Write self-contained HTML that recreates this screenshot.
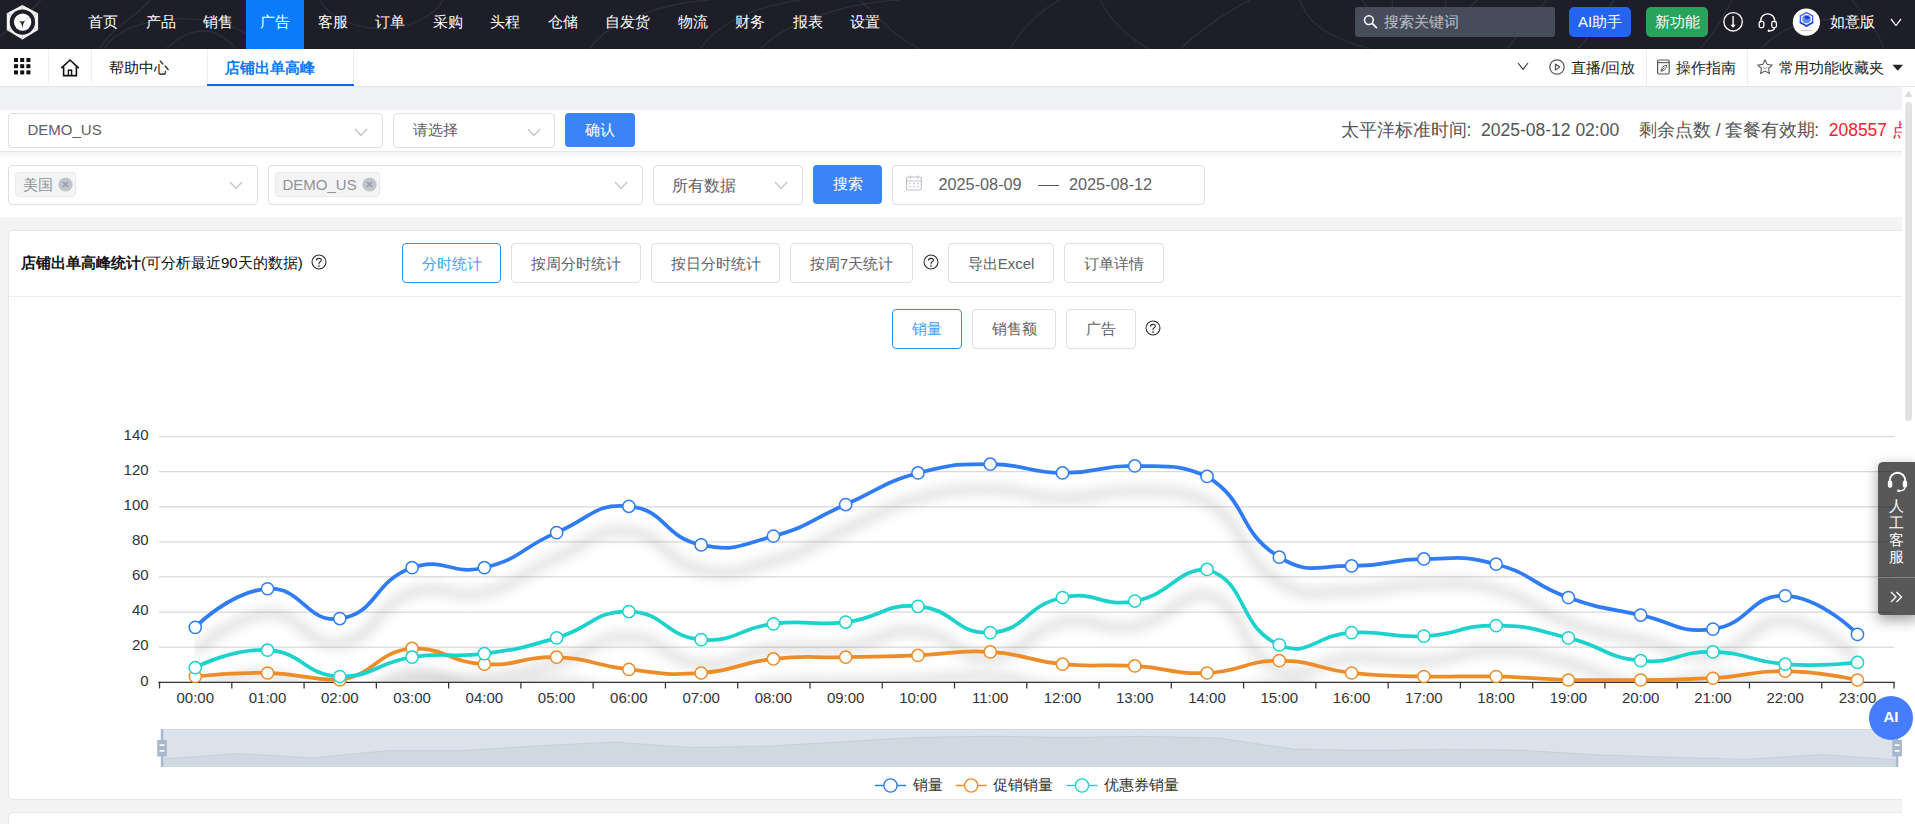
<!DOCTYPE html><html lang="zh"><head><meta charset="utf-8"><title>店铺出单高峰</title><style>
*{box-sizing:border-box;margin:0;padding:0}
html,body{width:1915px;height:824px;overflow:hidden;background:#f4f4f4}
body{font-family:"Liberation Sans",sans-serif;font-size:15px;color:#333;position:relative}
.abs{position:absolute}
.t{position:absolute;white-space:nowrap;line-height:20px;height:20px}
#nav{position:absolute;left:0;top:0;width:1915px;height:49px;background:#1e1e28;overflow:hidden}
#nav .ni{position:absolute;top:0;height:49px;line-height:44px;color:#fff;font-size:15px;font-weight:500;text-align:center;white-space:nowrap}
#tabs{position:absolute;left:0;top:49px;width:1915px;height:38px;background:#fff;border-bottom:1px solid #e6e6e6}
.vsep{position:absolute;top:0;width:1px;height:34px;background:#eee}
#band{position:absolute;left:0;top:87px;width:1902px;height:23px;background:#f0f2f5}
#row1{position:absolute;left:0;top:110px;width:1902px;height:42px;background:#fff;border-bottom:1px solid #e5e6e9}
#row1sh{position:absolute;left:0;top:152px;width:1902px;height:7px;background:linear-gradient(#f2f3f4,#fff)}
#row2{position:absolute;left:0;top:152px;width:1902px;height:65px;background:#fff}
.sel{position:absolute;background:#fff;border:1px solid #dcdfe6;border-radius:4px}
.btn{position:absolute;background:#fff;border:1px solid #dcdfe6;border-radius:4px;color:#606266;font-size:15px;text-align:center;white-space:nowrap;height:40px;line-height:39px;top:243px}
.btn.on{border-color:#3a8ee6;color:#409eff}
.pbtn{position:absolute;background:#3a84f7;border-radius:4px;color:#fff;font-size:15px;text-align:center;white-space:nowrap}
.tag{position:absolute;background:#f4f4f5;border:1px solid #e9e9eb;border-radius:4px;height:25px;top:6px;color:#909399;font-size:15px;line-height:23px;white-space:nowrap}
.card{position:absolute;left:8px;width:1900px;background:#fff;border:1px solid #e4e7ed;border-radius:5px}
#scroll{position:absolute;left:1902px;top:87px;width:13px;height:737px;background:#fff}
text.ax{font-family:"Liberation Sans",sans-serif;font-size:15px;fill:#333}
</style></head><body>
<div id="nav">
<svg class="abs" style="left:0;top:0" width="1915" height="49" viewBox="0 0 1915 49"><g fill="none" stroke="#fff" stroke-opacity="0.07" stroke-width="1.3"><path d="M0 36 C10 30 30 12 41 0"/><path d="M104 49 C120 20 190 8 240 30 C250 36 256 44 258 49"/><path d="M150 0 C140 14 108 30 100 49"/><path d="M166 49 C190 26 215 24 236 49"/><path d="M320 0 C330 22 380 40 420 20 C432 14 440 6 443 0"/><path d="M590 49 C600 30 640 10 690 2 C700 1 706 0 710 0"/><path d="M700 49 C720 20 760 6 800 0"/><path d="M760 49 C800 10 880 0 900 0"/><path d="M860 0 C880 20 900 40 920 49"/><path d="M1010 49 C1020 30 1040 10 1060 0"/><path d="M1100 0 C1110 20 1130 40 1150 49"/><path d="M1300 0 C1310 30 1340 40 1370 49"/><path d="M1180 49 C1200 30 1230 10 1250 0"/><path d="M1507 49 C1520 32 1535 13 1547 0"/><path d="M1578 49 C1590 35 1604 16 1614 0"/><path d="M1700 49 C1712 36 1722 20 1732 0"/><path d="M1392 0 A27 27 0 0 0 1446 0"/><path d="M1362 0 C1380 30 1440 36 1478 0"/><path d="M1852 0 C1870 20 1880 36 1884 49"/><path d="M1760 49 C1790 20 1830 10 1860 30"/></g></svg>
<svg class="abs" style="left:5px;top:3px" width="36" height="39" viewBox="0 0 36 39"><path d="M17.4 2 L33.1 10.2 L33.1 26.9 L17.4 36.6 L1.8 26.9 L1.8 10.2 Z" fill="#f3f3f4"/><path d="M17.4 2 L17.4 7 M33.1 10.2 L28.6 12.7 M33.1 26.9 L28.6 25.4 M17.4 36.6 L17.4 32 M1.8 26.9 L6.2 25.4 M1.8 10.2 L6.2 12.7" stroke="#c4c4c8" stroke-width="0.8"/><circle cx="17.4" cy="19.1" r="12.7" fill="#1e1e28"/><circle cx="17.6" cy="19.1" r="8.7" fill="#fdfdfd"/><path d="M14.4 18.1 L11.8 14.6 M20.3 17.9 L23.2 14.4" stroke="#d5d5d8" stroke-width="1"/><path d="M14.2 18 Q17.4 19 20.2 17.8 Q17.9 19.8 17.5 25.8 Q17 19.8 14.2 18 Z" fill="#1e1e28"/></svg>
<div class="ni" style="left:74.0px;width:58.0px">首页</div>
<div class="ni" style="left:131.5px;width:58.0px">产品</div>
<div class="ni" style="left:189.0px;width:58.0px">销售</div>
<div class="ni" style="left:246.0px;width:58.0px;background:#0a7bfa">广告</div>
<div class="ni" style="left:303.5px;width:58.0px">客服</div>
<div class="ni" style="left:361.0px;width:58.0px">订单</div>
<div class="ni" style="left:418.5px;width:58.0px">采购</div>
<div class="ni" style="left:476.0px;width:58.0px">头程</div>
<div class="ni" style="left:533.5px;width:58.0px">仓储</div>
<div class="ni" style="left:591.0px;width:73.0px">自发货</div>
<div class="ni" style="left:663.5px;width:58.0px">物流</div>
<div class="ni" style="left:721.0px;width:58.0px">财务</div>
<div class="ni" style="left:778.5px;width:58.0px">报表</div>
<div class="ni" style="left:836.0px;width:58.0px">设置</div>
<div class="abs" style="left:1355px;top:7px;width:200px;height:30px;background:#474c5a;border-radius:3px"></div>
<svg class="abs" style="left:1362px;top:13px" width="18" height="18" viewBox="0 0 18 18"><circle cx="6.9" cy="7.1" r="4.4" fill="none" stroke="#fff" stroke-width="1.5"/><path d="M10.2 10.4 L14.4 14.6" stroke="#fff" stroke-width="1.7" stroke-linecap="round"/></svg>
<div class="t" style="left:1384px;top:12px;color:#bdc0c7;font-size:15px">搜索关键词</div>
<div class="pbtn" style="left:1569px;top:7px;width:62px;height:30px;line-height:29px;background:#2464f2;border-radius:5px;font-weight:500">AI助手</div>
<div class="pbtn" style="left:1646px;top:7px;width:62px;height:30px;line-height:29px;background:#27a35b;border-radius:5px;font-weight:500">新功能</div>
<svg class="abs" style="left:1722px;top:11px" width="22" height="22" viewBox="0 0 22 22"><circle cx="11.1" cy="10.8" r="9.2" fill="none" stroke="#fff" stroke-width="1.35"/><path d="M11.1 5 L11.1 14.4" fill="none" stroke="#fff" stroke-width="1.4"/><path d="M8.5 13.8 L13.7 13.8 L11.1 16.8 Z" fill="#fff"/></svg>
<svg class="abs" style="left:1757px;top:11px" width="22" height="22" viewBox="0 0 22 22"><path d="M3.7 11.5 V9.8 A7 7 0 0 1 17.7 9.8 V11.5" fill="none" stroke="#fff" stroke-width="1.35"/><rect x="2.2" y="10.4" width="4.6" height="6.2" rx="1.5" fill="none" stroke="#fff" stroke-width="1.3"/><rect x="14.8" y="10.4" width="4.6" height="6.2" rx="1.5" fill="none" stroke="#fff" stroke-width="1.3"/><path d="M17.6 16.6 C17.4 18.8 15.2 19.7 12.4 19.8" fill="none" stroke="#fff" stroke-width="1.3"/><circle cx="11.8" cy="19.7" r="1.2" fill="#fff"/></svg>
<svg class="abs" style="left:1792px;top:8px" width="29" height="29" viewBox="0 0 29 29"><circle cx="14.4" cy="14.2" r="13.6" fill="#fff"/><path d="M14.5 3.8 L21.3 7.5 L21.3 15 L14.5 18.9 L7.7 15 L7.7 7.5 Z" fill="#3f63e6"/><path d="M14.5 5.3 L20 8.3 L20 14.3 L14.5 17.4 L9 14.3 L9 8.3 Z" fill="#e9f0ff"/><circle cx="14.5" cy="11.2" r="4.1" fill="#5d8df5"/><path d="M12 9 A4.1 4.1 0 0 1 18.4 10 L14.5 11.6 Z" fill="#2638b8"/><path d="M7.7 15 L14.5 18.9 L21.3 15 L21.3 13.2 L14.5 17 L7.7 13.2Z" fill="#3245d0"/><rect x="8.6" y="21.8" width="11.8" height="1.3" fill="#cdd0d8"/></svg>
<div class="t" style="left:1830px;top:12px;color:#fff;font-size:15px;font-weight:500">如意版</div>
<svg class="abs" style="left:1889.8px;top:18.0px" width="12" height="8" viewBox="0 0 12 8"><path d="M1 1 L6.0 7.6 L11 1" fill="none" stroke="#f0f0f0" stroke-width="1.3"/></svg>
</div>
<div id="tabs">
<svg class="abs" style="left:13.7px;top:9px" width="18" height="18" viewBox="0 0 18 18"><rect x="0.0" y="0.0" width="4" height="4" fill="#111"/><rect x="6.2" y="0.0" width="4" height="4" fill="#111"/><rect x="12.4" y="0.0" width="4" height="4" fill="#111"/><rect x="0.0" y="6.2" width="4" height="4" fill="#111"/><rect x="6.2" y="6.2" width="4" height="4" fill="#111"/><rect x="12.4" y="6.2" width="4" height="4" fill="#111"/><rect x="0.0" y="12.4" width="4" height="4" fill="#111"/><rect x="6.2" y="12.4" width="4" height="4" fill="#111"/><rect x="12.4" y="12.4" width="4" height="4" fill="#111"/></svg>
<div class="vsep" style="left:48px"></div><div class="vsep" style="left:91px"></div><div class="vsep" style="left:207px"></div><div class="vsep" style="left:353px"></div>
<svg class="abs" style="left:59px;top:8px" width="22" height="22" viewBox="0 0 22 22"><path d="M2.3 11.2 L11 3 L19.7 11.2" fill="none" stroke="#111" stroke-width="1.6" stroke-linejoin="miter"/><path d="M4.6 9.8 V18.6 H17.4 V9.8" fill="none" stroke="#111" stroke-width="1.6"/><path d="M9.4 18.6 V13.3 H12.6 V18.6" fill="none" stroke="#111" stroke-width="1.4"/></svg>
<div class="t" style="left:109px;top:9px;color:#111;font-weight:500">帮助中心</div>
<div class="t" style="left:225px;top:9px;color:#0a7bfa;font-weight:bold">店铺出单高峰</div>
<div class="abs" style="left:207px;top:35px;width:147px;height:2px;background:#0068f5"></div>
<svg class="abs" style="left:1516.6px;top:13.1px" width="12" height="8" viewBox="0 0 12 8"><path d="M1 1 L6.0 7.4 L11 1" fill="none" stroke="#333" stroke-width="1.1"/></svg>
<div class="vsep" style="left:1646px;height:37px"></div><div class="vsep" style="left:1747px;height:37px"></div>
<svg class="abs" style="left:1548px;top:9px" width="18" height="18" viewBox="0 0 18 18"><circle cx="9" cy="9" r="7.2" fill="none" stroke="#555" stroke-width="1.2"/><path d="M7.4 6 L11.8 9 L7.4 12 Z" fill="none" stroke="#555" stroke-width="1.1" stroke-linejoin="round"/></svg>
<div class="t" style="left:1571px;top:9px;color:#222;font-weight:500">直播/回放</div>
<svg class="abs" style="left:1655px;top:9px" width="18" height="18" viewBox="0 0 18 18"><rect x="2.6" y="2" width="11.6" height="14" rx="1.5" fill="none" stroke="#555" stroke-width="1.2"/><path d="M2.6 4.6 H14.2" stroke="#555" stroke-width="1.1"/><path d="M6 13.2 C6 10 8 7.6 11.6 7.2 C11.4 10.6 9.4 12.6 6 13.2 Z M6 13.2 L9.4 9.6" fill="none" stroke="#555" stroke-width="0.9"/></svg>
<div class="t" style="left:1676px;top:9px;color:#222;font-weight:500">操作指南</div>
<svg class="abs" style="left:1756px;top:9px" width="18" height="18" viewBox="0 0 18 18"><path d="M9 1.8 L11.2 6.4 L16.2 7 L12.5 10.5 L13.5 15.5 L9 13 L4.5 15.5 L5.5 10.5 L1.8 7 L6.8 6.4 Z" fill="none" stroke="#666" stroke-width="1.15" stroke-linejoin="round"/><path d="M6.6 9.2 L9 10.7 L11.4 9.2" fill="none" stroke="#6a8df8" stroke-width="0.9"/></svg>
<div class="t" style="left:1779px;top:9px;color:#222;font-weight:500">常用功能收藏夹</div>
<svg class="abs" style="left:1892px;top:15px" width="12" height="8" viewBox="0 0 12 8"><path d="M0.5 0.8 H11 L5.75 6.8 Z" fill="#222"/></svg>
</div>
<div id="band"></div>
<div id="row2">
<div class="sel" style="left:8px;top:13px;width:250px;height:40px"><div class="tag" style="left:6px;width:61px;padding-left:6.5px">美国</div></div>
<div class="sel" style="left:268px;top:13px;width:375px;height:40px"><div class="tag" style="left:6px;width:105px;padding-left:6.5px">DEMO_US</div></div>
<div class="sel" style="left:653px;top:13px;width:150px;height:40px"></div>
<div class="t" style="left:672px;top:23px;font-size:16.25px;color:#606266">所有数据</div>
<div class="pbtn" style="left:813px;top:13px;width:69px;height:39px;line-height:38px">搜索</div>
<div class="sel" style="left:892px;top:13px;width:313px;height:40px"></div>
<div class="t" style="left:938.5px;top:22px;font-size:16.25px;color:#606266">2025-08-09</div>
<div class="t" style="left:1069px;top:22px;font-size:16.25px;color:#606266">2025-08-12</div>
<div class="abs" style="left:1038px;top:33px;width:21px;height:1.3px;background:#555"></div>
<svg class="abs" style="left:905px;top:22px" width="18" height="18" viewBox="0 0 18 18"><rect x="1.6" y="3" width="14.8" height="13" rx="1.2" fill="none" stroke="#c0c4cc" stroke-width="1.2"/><path d="M1.6 7 H16.4 M5.4 1.4 V4.4 M12.6 1.4 V4.4" stroke="#c0c4cc" stroke-width="1.2"/><path d="M4.3 9.6 H6 M8.1 9.6 H9.8 M11.9 9.6 H13.6 M4.3 12.6 H6 M8.1 12.6 H9.8 M11.9 12.6 H13.6" stroke="#c0c4cc" stroke-width="1.3"/></svg>
<svg class="abs" style="left:57.5px;top:24.5px" width="15" height="15" viewBox="0 0 15 15"><circle cx="7.5" cy="7.5" r="7.1" fill="#c0c4cc"/><path d="M4.9 4.9 L10.1 10.1 M10.1 4.9 L4.9 10.1" stroke="#8e939c" stroke-width="1.1"/></svg>
<svg class="abs" style="left:361.5px;top:24.5px" width="15" height="15" viewBox="0 0 15 15"><circle cx="7.5" cy="7.5" r="7.1" fill="#c0c4cc"/><path d="M4.9 4.9 L10.1 10.1 M10.1 4.9 L4.9 10.1" stroke="#8e939c" stroke-width="1.1"/></svg>
<svg class="abs" style="left:229.0px;top:28.5px" width="14" height="8" viewBox="0 0 14 8"><path d="M1 1 L7.0 7.5 L13 1" fill="none" stroke="#c0c4cc" stroke-width="1.3"/></svg>
<svg class="abs" style="left:614.0px;top:28.5px" width="14" height="8" viewBox="0 0 14 8"><path d="M1 1 L7.0 7.5 L13 1" fill="none" stroke="#c0c4cc" stroke-width="1.3"/></svg>
<svg class="abs" style="left:774.0px;top:28.5px" width="14" height="8" viewBox="0 0 14 8"><path d="M1 1 L7.0 7.5 L13 1" fill="none" stroke="#c0c4cc" stroke-width="1.3"/></svg>
</div>
<div id="row1">
<div class="sel" style="left:8px;top:3px;width:375px;height:35px"></div>
<div class="t" style="left:27.5px;top:10px;color:#606266">DEMO_US</div>
<div class="sel" style="left:393px;top:3px;width:162px;height:35px"></div>
<div class="t" style="left:412.5px;top:10px;color:#606266">请选择</div>
<div class="pbtn" style="left:565px;top:3px;width:70px;height:34px;line-height:33px">确认</div>
<svg class="abs" style="left:353.6px;top:18.4px" width="14" height="8" viewBox="0 0 14 8"><path d="M1 1 L7.0 7.5 L13 1" fill="none" stroke="#c0c4cc" stroke-width="1.3"/></svg>
<svg class="abs" style="left:526.8px;top:18.4px" width="14" height="8" viewBox="0 0 14 8"><path d="M1 1 L7.0 7.5 L13 1" fill="none" stroke="#c0c4cc" stroke-width="1.3"/></svg>
<div class="t" style="left:1340.5px;top:10px;font-size:17.5px;color:#555">太平洋标准时间</div>
<div class="t" style="left:1466.5px;top:10px;font-size:17.5px;color:#555">:</div>
<div class="t" style="left:1481px;top:10px;font-size:17.5px;color:#555">2025-08-12 02:00</div>
<div class="t" style="left:1638.8px;top:10px;font-size:17.5px;color:#555">剩余点数 / 套餐有效期</div>
<div class="t" style="left:1814.3px;top:10px;font-size:17.5px;color:#555">:</div>
<div class="t" style="left:1828.7px;top:10px;font-size:17.5px;color:#f5222d;width:73.3px;overflow:hidden">208557 点</div>
</div>
<div id="row1sh"></div>
<div class="card" style="top:230px;height:570px"></div>
<div class="card" style="top:812px;height:40px"></div>
<div class="abs" style="left:9px;top:296px;width:1893px;height:1px;background:#e9ebf0"></div>
<div class="t" style="left:21px;top:253px;color:#111"><b>店铺出单高峰统计</b>(可分析最近90天的数据)</div>
<svg class="abs" style="left:310.45px;top:253.40px" width="18" height="18" viewBox="0 0 18 18"><circle cx="9" cy="9" r="7" fill="none" stroke="#2a2a2a" stroke-width="1.05"/><path d="M6.5 7.5 C6.4 4.8 11.4 4.6 11.4 7.2 C11.4 8.8 9 8.8 9 10.4 L9 11.3" fill="none" stroke="#2a2a2a" stroke-width="1.05"/><circle cx="9" cy="13.1" r="0.8" fill="#222"/></svg>
<div class="btn on" style="left:402px;width:99px">分时统计</div>
<div class="btn" style="left:511px;width:130px">按周分时统计</div>
<div class="btn" style="left:651px;width:129px">按日分时统计</div>
<div class="btn" style="left:790px;width:123px">按周7天统计</div>
<div class="btn" style="left:948px;width:106px">导出Excel</div>
<div class="btn" style="left:1064px;width:100px">订单详情</div>
<svg class="abs" style="left:922.00px;top:253.40px" width="18" height="18" viewBox="0 0 18 18"><circle cx="9" cy="9" r="7" fill="none" stroke="#2a2a2a" stroke-width="1.05"/><path d="M6.5 7.5 C6.4 4.8 11.4 4.6 11.4 7.2 C11.4 8.8 9 8.8 9 10.4 L9 11.3" fill="none" stroke="#2a2a2a" stroke-width="1.05"/><circle cx="9" cy="13.1" r="0.8" fill="#222"/></svg>
<div class="btn on" style="left:892px;width:70px;top:309px;line-height:37px">销量</div>
<div class="btn" style="left:972px;width:84px;top:309px;line-height:37px">销售额</div>
<div class="btn" style="left:1066px;width:70px;top:309px;line-height:37px">广告</div>
<svg class="abs" style="left:1144.00px;top:319.30px" width="18" height="18" viewBox="0 0 18 18"><circle cx="9" cy="9" r="7" fill="none" stroke="#2a2a2a" stroke-width="1.05"/><path d="M6.5 7.5 C6.4 4.8 11.4 4.6 11.4 7.2 C11.4 8.8 9 8.8 9 10.4 L9 11.3" fill="none" stroke="#2a2a2a" stroke-width="1.05"/><circle cx="9" cy="13.1" r="0.8" fill="#222"/></svg>
<svg id="chart" width="1915" height="824" viewBox="0 0 1915 824" style="position:absolute;left:0;top:0">
<defs><filter id="sh" x="-5%" y="-50%" width="110%" height="200%"><feGaussianBlur stdDeviation="6.25"/></filter><clipPath id="gc"><rect x="194.1" y="430" width="1664.6" height="252.4"/></clipPath></defs>
<line x1="159" x2="1894.2" y1="647.16" y2="647.16" stroke="#d9d9d9" stroke-width="1.25"/>
<line x1="159" x2="1894.2" y1="612.07" y2="612.07" stroke="#d9d9d9" stroke-width="1.25"/>
<line x1="159" x2="1894.2" y1="576.97" y2="576.97" stroke="#d9d9d9" stroke-width="1.25"/>
<line x1="159" x2="1894.2" y1="541.88" y2="541.88" stroke="#d9d9d9" stroke-width="1.25"/>
<line x1="159" x2="1894.2" y1="506.79" y2="506.79" stroke="#d9d9d9" stroke-width="1.25"/>
<line x1="159" x2="1894.2" y1="471.70" y2="471.70" stroke="#d9d9d9" stroke-width="1.25"/>
<line x1="159" x2="1894.2" y1="436.61" y2="436.61" stroke="#d9d9d9" stroke-width="1.25"/>
<text x="148.6" y="685.55" text-anchor="end" class="ax">0</text>
<text x="148.6" y="650.46" text-anchor="end" class="ax">20</text>
<text x="148.6" y="615.37" text-anchor="end" class="ax">40</text>
<text x="148.6" y="580.27" text-anchor="end" class="ax">60</text>
<text x="148.6" y="545.18" text-anchor="end" class="ax">80</text>
<text x="148.6" y="510.09" text-anchor="end" class="ax">100</text>
<text x="148.6" y="475.00" text-anchor="end" class="ax">120</text>
<text x="148.6" y="439.91" text-anchor="end" class="ax">140</text>
<g clip-path="url(#gc)"><path d="M195.27 627.36C195.27 627.36 230.56 591.00 267.54 588.76C302.83 586.61 305.89 623.53 339.81 618.58C378.16 613.00 372.33 581.70 412.08 567.70C444.60 556.26 450.13 576.01 484.35 567.70C522.40 558.46 519.70 548.30 556.62 532.61C591.97 517.59 593.90 503.32 628.89 506.29C666.17 509.46 662.90 536.99 701.16 544.89C735.17 551.91 738.75 545.80 773.43 536.12C811.02 525.63 809.57 520.33 845.70 504.54C881.84 488.74 880.39 483.45 917.97 472.95C952.66 464.18 954.11 464.18 990.24 464.18C1026.38 464.18 1026.33 472.51 1062.51 472.95C1098.60 473.39 1098.75 465.06 1134.78 465.93C1171.02 466.81 1177.95 464.18 1207.05 476.46C1250.22 503.71 1236.10 530.41 1279.32 557.17C1308.37 575.16 1315.41 565.51 1351.59 565.95C1387.68 566.38 1387.69 559.37 1423.86 558.93C1459.96 558.49 1461.69 554.99 1496.13 564.19C1533.96 574.29 1531.05 584.38 1568.40 597.53C1603.32 609.82 1604.36 607.14 1640.67 615.08C1676.63 622.93 1678.22 633.75 1712.94 629.11C1750.49 624.10 1749.60 594.48 1785.21 595.77C1821.87 597.11 1857.48 634.38 1857.48 634.38" transform="translate(0,25)" fill="none" stroke="#000" stroke-opacity="0.33" stroke-width="3.75" filter="url(#sh)"/></g>
<g clip-path="url(#gc)"><path d="M195.27 676.49C195.27 676.49 231.47 672.10 267.54 672.98C303.74 673.86 305.17 680.00 339.81 680.00C377.44 673.60 374.79 652.49 412.08 648.41C447.06 648.41 447.88 661.99 484.35 664.20C520.15 666.38 520.66 655.88 556.62 657.19C592.93 658.51 592.52 665.49 628.89 669.47C664.79 673.39 665.34 675.59 701.16 672.98C737.61 670.32 736.97 662.92 773.43 658.94C809.24 655.03 809.57 658.06 845.70 657.19C881.84 656.31 881.86 656.75 917.97 655.43C954.13 654.11 954.35 649.74 990.24 651.92C1026.62 654.13 1026.13 660.67 1062.51 664.20C1098.40 667.69 1098.73 663.77 1134.78 665.96C1171.00 668.16 1171.09 674.29 1207.05 672.98C1243.36 671.65 1243.19 660.69 1279.32 660.69C1315.46 660.69 1315.22 669.00 1351.59 672.98C1387.49 676.90 1387.71 675.61 1423.86 676.49C1459.98 677.36 1460.02 675.61 1496.13 676.49C1532.29 677.36 1532.25 679.12 1568.40 680.00C1604.52 680.00 1604.55 680.00 1640.67 680.00C1676.82 679.56 1676.89 680.00 1712.94 678.24C1749.16 676.04 1749.13 670.78 1785.21 671.22C1821.40 671.66 1857.48 680.00 1857.48 680.00" transform="translate(0,25)" fill="none" stroke="#000" stroke-opacity="0.33" stroke-width="3.75" filter="url(#sh)"/></g>
<g clip-path="url(#gc)"><path d="M195.27 667.71C195.27 667.71 232.02 648.01 267.54 650.17C304.29 652.40 303.18 674.71 339.81 676.49C375.45 676.49 375.35 662.98 412.08 657.19C447.62 651.58 448.62 658.45 484.35 653.68C520.89 648.80 521.19 648.21 556.62 637.88C593.46 627.15 592.90 611.13 628.89 611.57C665.17 612.01 664.18 636.50 701.16 639.64C736.45 642.64 736.88 628.29 773.43 623.85C809.15 619.51 809.99 626.43 845.70 622.09C882.26 617.66 882.54 603.72 917.97 606.30C954.81 608.99 954.90 634.77 990.24 632.62C1027.17 630.38 1024.49 605.84 1062.51 597.53C1096.76 590.05 1100.21 607.75 1134.78 601.04C1172.48 593.72 1175.97 569.46 1207.05 569.46C1248.24 581.95 1236.85 626.34 1279.32 644.90C1309.12 657.93 1315.22 634.83 1351.59 632.62C1387.49 630.44 1387.90 637.88 1423.86 636.13C1460.17 634.37 1460.07 625.16 1496.13 625.60C1532.34 626.04 1532.87 629.26 1568.40 637.88C1605.14 646.80 1603.81 657.12 1640.67 660.69C1676.08 664.13 1676.94 651.05 1712.94 651.92C1749.21 652.80 1748.83 661.55 1785.21 664.20C1821.10 666.82 1857.48 662.45 1857.48 662.45" transform="translate(0,25)" fill="none" stroke="#000" stroke-opacity="0.33" stroke-width="3.75" filter="url(#sh)"/></g>
<line x1="158.2" x2="1894.8" y1="682.25" y2="682.25" stroke="#333" stroke-width="1.25"/>
<line x1="159.54" x2="159.54" y1="682.25" y2="688.45" stroke="#333" stroke-width="1.25"/>
<line x1="231.81" x2="231.81" y1="682.25" y2="688.45" stroke="#333" stroke-width="1.25"/>
<line x1="304.08" x2="304.08" y1="682.25" y2="688.45" stroke="#333" stroke-width="1.25"/>
<line x1="376.35" x2="376.35" y1="682.25" y2="688.45" stroke="#333" stroke-width="1.25"/>
<line x1="448.62" x2="448.62" y1="682.25" y2="688.45" stroke="#333" stroke-width="1.25"/>
<line x1="520.89" x2="520.89" y1="682.25" y2="688.45" stroke="#333" stroke-width="1.25"/>
<line x1="593.16" x2="593.16" y1="682.25" y2="688.45" stroke="#333" stroke-width="1.25"/>
<line x1="665.43" x2="665.43" y1="682.25" y2="688.45" stroke="#333" stroke-width="1.25"/>
<line x1="737.70" x2="737.70" y1="682.25" y2="688.45" stroke="#333" stroke-width="1.25"/>
<line x1="809.97" x2="809.97" y1="682.25" y2="688.45" stroke="#333" stroke-width="1.25"/>
<line x1="882.24" x2="882.24" y1="682.25" y2="688.45" stroke="#333" stroke-width="1.25"/>
<line x1="954.51" x2="954.51" y1="682.25" y2="688.45" stroke="#333" stroke-width="1.25"/>
<line x1="1026.78" x2="1026.78" y1="682.25" y2="688.45" stroke="#333" stroke-width="1.25"/>
<line x1="1099.05" x2="1099.05" y1="682.25" y2="688.45" stroke="#333" stroke-width="1.25"/>
<line x1="1171.32" x2="1171.32" y1="682.25" y2="688.45" stroke="#333" stroke-width="1.25"/>
<line x1="1243.59" x2="1243.59" y1="682.25" y2="688.45" stroke="#333" stroke-width="1.25"/>
<line x1="1315.86" x2="1315.86" y1="682.25" y2="688.45" stroke="#333" stroke-width="1.25"/>
<line x1="1388.13" x2="1388.13" y1="682.25" y2="688.45" stroke="#333" stroke-width="1.25"/>
<line x1="1460.40" x2="1460.40" y1="682.25" y2="688.45" stroke="#333" stroke-width="1.25"/>
<line x1="1532.67" x2="1532.67" y1="682.25" y2="688.45" stroke="#333" stroke-width="1.25"/>
<line x1="1604.94" x2="1604.94" y1="682.25" y2="688.45" stroke="#333" stroke-width="1.25"/>
<line x1="1677.21" x2="1677.21" y1="682.25" y2="688.45" stroke="#333" stroke-width="1.25"/>
<line x1="1749.48" x2="1749.48" y1="682.25" y2="688.45" stroke="#333" stroke-width="1.25"/>
<line x1="1821.75" x2="1821.75" y1="682.25" y2="688.45" stroke="#333" stroke-width="1.25"/>
<line x1="1894.02" x2="1894.02" y1="682.25" y2="688.45" stroke="#333" stroke-width="1.25"/>
<text x="195.27" y="702.8" text-anchor="middle" class="ax">00:00</text>
<text x="267.54" y="702.8" text-anchor="middle" class="ax">01:00</text>
<text x="339.81" y="702.8" text-anchor="middle" class="ax">02:00</text>
<text x="412.08" y="702.8" text-anchor="middle" class="ax">03:00</text>
<text x="484.35" y="702.8" text-anchor="middle" class="ax">04:00</text>
<text x="556.62" y="702.8" text-anchor="middle" class="ax">05:00</text>
<text x="628.89" y="702.8" text-anchor="middle" class="ax">06:00</text>
<text x="701.16" y="702.8" text-anchor="middle" class="ax">07:00</text>
<text x="773.43" y="702.8" text-anchor="middle" class="ax">08:00</text>
<text x="845.70" y="702.8" text-anchor="middle" class="ax">09:00</text>
<text x="917.97" y="702.8" text-anchor="middle" class="ax">10:00</text>
<text x="990.24" y="702.8" text-anchor="middle" class="ax">11:00</text>
<text x="1062.51" y="702.8" text-anchor="middle" class="ax">12:00</text>
<text x="1134.78" y="702.8" text-anchor="middle" class="ax">13:00</text>
<text x="1207.05" y="702.8" text-anchor="middle" class="ax">14:00</text>
<text x="1279.32" y="702.8" text-anchor="middle" class="ax">15:00</text>
<text x="1351.59" y="702.8" text-anchor="middle" class="ax">16:00</text>
<text x="1423.86" y="702.8" text-anchor="middle" class="ax">17:00</text>
<text x="1496.13" y="702.8" text-anchor="middle" class="ax">18:00</text>
<text x="1568.40" y="702.8" text-anchor="middle" class="ax">19:00</text>
<text x="1640.67" y="702.8" text-anchor="middle" class="ax">20:00</text>
<text x="1712.94" y="702.8" text-anchor="middle" class="ax">21:00</text>
<text x="1785.21" y="702.8" text-anchor="middle" class="ax">22:00</text>
<text x="1857.48" y="702.8" text-anchor="middle" class="ax">23:00</text>
<path d="M195.27 627.36C195.27 627.36 230.56 591.00 267.54 588.76C302.83 586.61 305.89 623.53 339.81 618.58C378.16 613.00 372.33 581.70 412.08 567.70C444.60 556.26 450.13 576.01 484.35 567.70C522.40 558.46 519.70 548.30 556.62 532.61C591.97 517.59 593.90 503.32 628.89 506.29C666.17 509.46 662.90 536.99 701.16 544.89C735.17 551.91 738.75 545.80 773.43 536.12C811.02 525.63 809.57 520.33 845.70 504.54C881.84 488.74 880.39 483.45 917.97 472.95C952.66 464.18 954.11 464.18 990.24 464.18C1026.38 464.18 1026.33 472.51 1062.51 472.95C1098.60 473.39 1098.75 465.06 1134.78 465.93C1171.02 466.81 1177.95 464.18 1207.05 476.46C1250.22 503.71 1236.10 530.41 1279.32 557.17C1308.37 575.16 1315.41 565.51 1351.59 565.95C1387.68 566.38 1387.69 559.37 1423.86 558.93C1459.96 558.49 1461.69 554.99 1496.13 564.19C1533.96 574.29 1531.05 584.38 1568.40 597.53C1603.32 609.82 1604.36 607.14 1640.67 615.08C1676.63 622.93 1678.22 633.75 1712.94 629.11C1750.49 624.10 1749.60 594.48 1785.21 595.77C1821.87 597.11 1857.48 634.38 1857.48 634.38" fill="none" stroke="#2f7cf6" stroke-width="3.75" stroke-linecap="butt" stroke-linejoin="bevel"/>
<path d="M195.27 676.49C195.27 676.49 231.47 672.10 267.54 672.98C303.74 673.86 305.17 680.00 339.81 680.00C377.44 673.60 374.79 652.49 412.08 648.41C447.06 648.41 447.88 661.99 484.35 664.20C520.15 666.38 520.66 655.88 556.62 657.19C592.93 658.51 592.52 665.49 628.89 669.47C664.79 673.39 665.34 675.59 701.16 672.98C737.61 670.32 736.97 662.92 773.43 658.94C809.24 655.03 809.57 658.06 845.70 657.19C881.84 656.31 881.86 656.75 917.97 655.43C954.13 654.11 954.35 649.74 990.24 651.92C1026.62 654.13 1026.13 660.67 1062.51 664.20C1098.40 667.69 1098.73 663.77 1134.78 665.96C1171.00 668.16 1171.09 674.29 1207.05 672.98C1243.36 671.65 1243.19 660.69 1279.32 660.69C1315.46 660.69 1315.22 669.00 1351.59 672.98C1387.49 676.90 1387.71 675.61 1423.86 676.49C1459.98 677.36 1460.02 675.61 1496.13 676.49C1532.29 677.36 1532.25 679.12 1568.40 680.00C1604.52 680.00 1604.55 680.00 1640.67 680.00C1676.82 679.56 1676.89 680.00 1712.94 678.24C1749.16 676.04 1749.13 670.78 1785.21 671.22C1821.40 671.66 1857.48 680.00 1857.48 680.00" fill="none" stroke="#ed8c28" stroke-width="3.75" stroke-linecap="butt" stroke-linejoin="bevel"/>
<path d="M195.27 667.71C195.27 667.71 232.02 648.01 267.54 650.17C304.29 652.40 303.18 674.71 339.81 676.49C375.45 676.49 375.35 662.98 412.08 657.19C447.62 651.58 448.62 658.45 484.35 653.68C520.89 648.80 521.19 648.21 556.62 637.88C593.46 627.15 592.90 611.13 628.89 611.57C665.17 612.01 664.18 636.50 701.16 639.64C736.45 642.64 736.88 628.29 773.43 623.85C809.15 619.51 809.99 626.43 845.70 622.09C882.26 617.66 882.54 603.72 917.97 606.30C954.81 608.99 954.90 634.77 990.24 632.62C1027.17 630.38 1024.49 605.84 1062.51 597.53C1096.76 590.05 1100.21 607.75 1134.78 601.04C1172.48 593.72 1175.97 569.46 1207.05 569.46C1248.24 581.95 1236.85 626.34 1279.32 644.90C1309.12 657.93 1315.22 634.83 1351.59 632.62C1387.49 630.44 1387.90 637.88 1423.86 636.13C1460.17 634.37 1460.07 625.16 1496.13 625.60C1532.34 626.04 1532.87 629.26 1568.40 637.88C1605.14 646.80 1603.81 657.12 1640.67 660.69C1676.08 664.13 1676.94 651.05 1712.94 651.92C1749.21 652.80 1748.83 661.55 1785.21 664.20C1821.10 666.82 1857.48 662.45 1857.48 662.45" fill="none" stroke="#1cd2cd" stroke-width="3.75" stroke-linecap="butt" stroke-linejoin="bevel"/>
<circle cx="195.27" cy="627.36" r="6.1" fill="#fff" stroke="#2f7cf6" stroke-width="1.5"/>
<circle cx="267.54" cy="588.76" r="6.1" fill="#fff" stroke="#2f7cf6" stroke-width="1.5"/>
<circle cx="339.81" cy="618.58" r="6.1" fill="#fff" stroke="#2f7cf6" stroke-width="1.5"/>
<circle cx="412.08" cy="567.70" r="6.1" fill="#fff" stroke="#2f7cf6" stroke-width="1.5"/>
<circle cx="484.35" cy="567.70" r="6.1" fill="#fff" stroke="#2f7cf6" stroke-width="1.5"/>
<circle cx="556.62" cy="532.61" r="6.1" fill="#fff" stroke="#2f7cf6" stroke-width="1.5"/>
<circle cx="628.89" cy="506.29" r="6.1" fill="#fff" stroke="#2f7cf6" stroke-width="1.5"/>
<circle cx="701.16" cy="544.89" r="6.1" fill="#fff" stroke="#2f7cf6" stroke-width="1.5"/>
<circle cx="773.43" cy="536.12" r="6.1" fill="#fff" stroke="#2f7cf6" stroke-width="1.5"/>
<circle cx="845.70" cy="504.54" r="6.1" fill="#fff" stroke="#2f7cf6" stroke-width="1.5"/>
<circle cx="917.97" cy="472.95" r="6.1" fill="#fff" stroke="#2f7cf6" stroke-width="1.5"/>
<circle cx="990.24" cy="464.18" r="6.1" fill="#fff" stroke="#2f7cf6" stroke-width="1.5"/>
<circle cx="1062.51" cy="472.95" r="6.1" fill="#fff" stroke="#2f7cf6" stroke-width="1.5"/>
<circle cx="1134.78" cy="465.93" r="6.1" fill="#fff" stroke="#2f7cf6" stroke-width="1.5"/>
<circle cx="1207.05" cy="476.46" r="6.1" fill="#fff" stroke="#2f7cf6" stroke-width="1.5"/>
<circle cx="1279.32" cy="557.17" r="6.1" fill="#fff" stroke="#2f7cf6" stroke-width="1.5"/>
<circle cx="1351.59" cy="565.95" r="6.1" fill="#fff" stroke="#2f7cf6" stroke-width="1.5"/>
<circle cx="1423.86" cy="558.93" r="6.1" fill="#fff" stroke="#2f7cf6" stroke-width="1.5"/>
<circle cx="1496.13" cy="564.19" r="6.1" fill="#fff" stroke="#2f7cf6" stroke-width="1.5"/>
<circle cx="1568.40" cy="597.53" r="6.1" fill="#fff" stroke="#2f7cf6" stroke-width="1.5"/>
<circle cx="1640.67" cy="615.08" r="6.1" fill="#fff" stroke="#2f7cf6" stroke-width="1.5"/>
<circle cx="1712.94" cy="629.11" r="6.1" fill="#fff" stroke="#2f7cf6" stroke-width="1.5"/>
<circle cx="1785.21" cy="595.77" r="6.1" fill="#fff" stroke="#2f7cf6" stroke-width="1.5"/>
<circle cx="1857.48" cy="634.38" r="6.1" fill="#fff" stroke="#2f7cf6" stroke-width="1.5"/>
<circle cx="195.27" cy="676.49" r="6.1" fill="#fff" stroke="#ed8c28" stroke-width="1.5"/>
<circle cx="267.54" cy="672.98" r="6.1" fill="#fff" stroke="#ed8c28" stroke-width="1.5"/>
<circle cx="339.81" cy="680.00" r="6.1" fill="#fff" stroke="#ed8c28" stroke-width="1.5"/>
<circle cx="412.08" cy="648.41" r="6.1" fill="#fff" stroke="#ed8c28" stroke-width="1.5"/>
<circle cx="484.35" cy="664.20" r="6.1" fill="#fff" stroke="#ed8c28" stroke-width="1.5"/>
<circle cx="556.62" cy="657.19" r="6.1" fill="#fff" stroke="#ed8c28" stroke-width="1.5"/>
<circle cx="628.89" cy="669.47" r="6.1" fill="#fff" stroke="#ed8c28" stroke-width="1.5"/>
<circle cx="701.16" cy="672.98" r="6.1" fill="#fff" stroke="#ed8c28" stroke-width="1.5"/>
<circle cx="773.43" cy="658.94" r="6.1" fill="#fff" stroke="#ed8c28" stroke-width="1.5"/>
<circle cx="845.70" cy="657.19" r="6.1" fill="#fff" stroke="#ed8c28" stroke-width="1.5"/>
<circle cx="917.97" cy="655.43" r="6.1" fill="#fff" stroke="#ed8c28" stroke-width="1.5"/>
<circle cx="990.24" cy="651.92" r="6.1" fill="#fff" stroke="#ed8c28" stroke-width="1.5"/>
<circle cx="1062.51" cy="664.20" r="6.1" fill="#fff" stroke="#ed8c28" stroke-width="1.5"/>
<circle cx="1134.78" cy="665.96" r="6.1" fill="#fff" stroke="#ed8c28" stroke-width="1.5"/>
<circle cx="1207.05" cy="672.98" r="6.1" fill="#fff" stroke="#ed8c28" stroke-width="1.5"/>
<circle cx="1279.32" cy="660.69" r="6.1" fill="#fff" stroke="#ed8c28" stroke-width="1.5"/>
<circle cx="1351.59" cy="672.98" r="6.1" fill="#fff" stroke="#ed8c28" stroke-width="1.5"/>
<circle cx="1423.86" cy="676.49" r="6.1" fill="#fff" stroke="#ed8c28" stroke-width="1.5"/>
<circle cx="1496.13" cy="676.49" r="6.1" fill="#fff" stroke="#ed8c28" stroke-width="1.5"/>
<circle cx="1568.40" cy="680.00" r="6.1" fill="#fff" stroke="#ed8c28" stroke-width="1.5"/>
<circle cx="1640.67" cy="680.00" r="6.1" fill="#fff" stroke="#ed8c28" stroke-width="1.5"/>
<circle cx="1712.94" cy="678.24" r="6.1" fill="#fff" stroke="#ed8c28" stroke-width="1.5"/>
<circle cx="1785.21" cy="671.22" r="6.1" fill="#fff" stroke="#ed8c28" stroke-width="1.5"/>
<circle cx="1857.48" cy="680.00" r="6.1" fill="#fff" stroke="#ed8c28" stroke-width="1.5"/>
<circle cx="195.27" cy="667.71" r="6.1" fill="#fff" stroke="#1cd2cd" stroke-width="1.5"/>
<circle cx="267.54" cy="650.17" r="6.1" fill="#fff" stroke="#1cd2cd" stroke-width="1.5"/>
<circle cx="339.81" cy="676.49" r="6.1" fill="#fff" stroke="#1cd2cd" stroke-width="1.5"/>
<circle cx="412.08" cy="657.19" r="6.1" fill="#fff" stroke="#1cd2cd" stroke-width="1.5"/>
<circle cx="484.35" cy="653.68" r="6.1" fill="#fff" stroke="#1cd2cd" stroke-width="1.5"/>
<circle cx="556.62" cy="637.88" r="6.1" fill="#fff" stroke="#1cd2cd" stroke-width="1.5"/>
<circle cx="628.89" cy="611.57" r="6.1" fill="#fff" stroke="#1cd2cd" stroke-width="1.5"/>
<circle cx="701.16" cy="639.64" r="6.1" fill="#fff" stroke="#1cd2cd" stroke-width="1.5"/>
<circle cx="773.43" cy="623.85" r="6.1" fill="#fff" stroke="#1cd2cd" stroke-width="1.5"/>
<circle cx="845.70" cy="622.09" r="6.1" fill="#fff" stroke="#1cd2cd" stroke-width="1.5"/>
<circle cx="917.97" cy="606.30" r="6.1" fill="#fff" stroke="#1cd2cd" stroke-width="1.5"/>
<circle cx="990.24" cy="632.62" r="6.1" fill="#fff" stroke="#1cd2cd" stroke-width="1.5"/>
<circle cx="1062.51" cy="597.53" r="6.1" fill="#fff" stroke="#1cd2cd" stroke-width="1.5"/>
<circle cx="1134.78" cy="601.04" r="6.1" fill="#fff" stroke="#1cd2cd" stroke-width="1.5"/>
<circle cx="1207.05" cy="569.46" r="6.1" fill="#fff" stroke="#1cd2cd" stroke-width="1.5"/>
<circle cx="1279.32" cy="644.90" r="6.1" fill="#fff" stroke="#1cd2cd" stroke-width="1.5"/>
<circle cx="1351.59" cy="632.62" r="6.1" fill="#fff" stroke="#1cd2cd" stroke-width="1.5"/>
<circle cx="1423.86" cy="636.13" r="6.1" fill="#fff" stroke="#1cd2cd" stroke-width="1.5"/>
<circle cx="1496.13" cy="625.60" r="6.1" fill="#fff" stroke="#1cd2cd" stroke-width="1.5"/>
<circle cx="1568.40" cy="637.88" r="6.1" fill="#fff" stroke="#1cd2cd" stroke-width="1.5"/>
<circle cx="1640.67" cy="660.69" r="6.1" fill="#fff" stroke="#1cd2cd" stroke-width="1.5"/>
<circle cx="1712.94" cy="651.92" r="6.1" fill="#fff" stroke="#1cd2cd" stroke-width="1.5"/>
<circle cx="1785.21" cy="664.20" r="6.1" fill="#fff" stroke="#1cd2cd" stroke-width="1.5"/>
<circle cx="1857.48" cy="662.45" r="6.1" fill="#fff" stroke="#1cd2cd" stroke-width="1.5"/>
<rect x="162.0" y="729" width="1735.1" height="38" fill="#fff"/>
<path d="M162.00 758.90 L237.44 753.51 L312.88 757.67 L388.32 750.57 L463.76 750.57 L539.20 745.67 L614.63 742.00 L690.07 747.39 L765.51 746.16 L840.95 741.76 L916.39 737.35 L991.83 736.12 L1067.27 737.35 L1142.71 736.37 L1218.15 737.84 L1293.59 749.10 L1369.03 750.33 L1444.47 749.35 L1519.90 750.08 L1595.34 754.73 L1670.78 757.18 L1746.22 759.14 L1821.66 754.49 L1897.10 759.88 L1897.10 767 L162.00 767 Z" fill="rgb(47,69,84)" fill-opacity="0.09"/>
<path d="M162.00 758.90 L237.44 753.51 L312.88 757.67 L388.32 750.57 L463.76 750.57 L539.20 745.67 L614.63 742.00 L690.07 747.39 L765.51 746.16 L840.95 741.76 L916.39 737.35 L991.83 736.12 L1067.27 737.35 L1142.71 736.37 L1218.15 737.84 L1293.59 749.10 L1369.03 750.33 L1444.47 749.35 L1519.90 750.08 L1595.34 754.73 L1670.78 757.18 L1746.22 759.14 L1821.66 754.49 L1897.10 759.88" fill="none" stroke="#2f4554" stroke-opacity="0.12" stroke-width="1"/>
<rect x="162.0" y="729" width="1735.1" height="38" fill="rgb(167,183,204)" fill-opacity="0.4"/>
<line x1="162.0" x2="1897.1" y1="729.4" y2="729.4" stroke="#d6d7da" stroke-width="1"/>
<rect x="160.80" y="729" width="2.4" height="38" fill="#a7b7cc"/>
<rect x="157.20" y="740" width="9.6" height="16.4" fill="#a7b7cc"/>
<rect x="159.50" y="744.2" width="5" height="1.8" fill="#fff" fill-opacity=".9"/>
<rect x="159.50" y="750" width="5" height="1.8" fill="#fff" fill-opacity=".9"/>
<rect x="1895.90" y="729" width="2.4" height="38" fill="#a7b7cc"/>
<rect x="1892.30" y="740" width="9.6" height="16.4" fill="#a7b7cc"/>
<rect x="1894.60" y="744.2" width="5" height="1.8" fill="#fff" fill-opacity=".9"/>
<rect x="1894.60" y="750" width="5" height="1.8" fill="#fff" fill-opacity=".9"/>
<line x1="874.9" x2="906.1" y1="785.5" y2="785.5" stroke="#2f7cf6" stroke-width="1.4"/>
<circle cx="890.5" cy="785.5" r="6.6" fill="#fff" stroke="#2f7cf6" stroke-width="1.4"/>
<text x="912.5" y="789.9" class="ax">销量</text>
<line x1="955.6" x2="986.8" y1="785.5" y2="785.5" stroke="#ed8c28" stroke-width="1.4"/>
<circle cx="971.2" cy="785.5" r="6.6" fill="#fff" stroke="#ed8c28" stroke-width="1.4"/>
<text x="993.0" y="789.9" class="ax">促销销量</text>
<line x1="1066.4" x2="1097.6" y1="785.5" y2="785.5" stroke="#1cd2cd" stroke-width="1.4"/>
<circle cx="1082.0" cy="785.5" r="6.6" fill="#fff" stroke="#1cd2cd" stroke-width="1.4"/>
<text x="1104.0" y="789.9" class="ax">优惠券销量</text>
</svg>
<div id="scroll"><svg class="abs" style="left:0;top:0" width="13" height="340" viewBox="0 0 13 340"><path d="M2.2 10 L6.5 4 L10.8 10 Z" fill="#dcdcdc"/><rect x="3.2" y="15" width="6.8" height="319" rx="3.4" fill="#e1e1e1"/></svg></div>
<div class="abs" style="left:1878px;top:462px;width:40px;height:153px;background:rgba(0,0,0,.655);border-radius:5px 0 0 4px;box-shadow:0 5px 14px rgba(0,0,0,.38)"></div>
<div class="abs" style="left:1878px;top:576.5px;width:37px;height:1px;background:rgba(255,255,255,.28)"></div>
<svg class="abs" style="left:1886px;top:470px" width="23" height="23" viewBox="0 0 22 22"><path d="M3.6 12.5 V10 A7.4 7.4 0 0 1 18.4 10 V12.5" fill="none" stroke="#fff" stroke-width="1.8"/><rect x="1.8" y="10" width="4.2" height="7" rx="2" fill="#fff"/><rect x="16" y="10" width="4.2" height="7" rx="2" fill="#fff"/><path d="M18 16.8 C18 19.5 15.5 20 12.6 20" fill="none" stroke="#fff" stroke-width="1.4"/><circle cx="12" cy="20" r="1.4" fill="#fff"/></svg>
<div class="t" style="left:1886px;top:496.5px;width:20px;text-align:center;color:#fff;font-size:15px;line-height:17px;height:17px">人</div>
<div class="t" style="left:1886px;top:513.5px;width:20px;text-align:center;color:#fff;font-size:15px;line-height:17px;height:17px">工</div>
<div class="t" style="left:1886px;top:530.5px;width:20px;text-align:center;color:#fff;font-size:15px;line-height:17px;height:17px">客</div>
<div class="t" style="left:1886px;top:547.5px;width:20px;text-align:center;color:#fff;font-size:15px;line-height:17px;height:17px">服</div>
<svg class="abs" style="left:1888px;top:590px" width="16" height="14" viewBox="0 0 16 14"><path d="M3 2 L8 7 L3 12 M8.5 2 L13.5 7 L8.5 12" fill="none" stroke="#fff" stroke-width="1.3"/></svg>
<div class="abs" style="left:1869px;top:696px;width:44px;height:44px;border-radius:22px;background:#467dff;color:#fff;font-weight:bold;font-size:15px;line-height:42px;text-align:center">AI</div>
</body></html>
